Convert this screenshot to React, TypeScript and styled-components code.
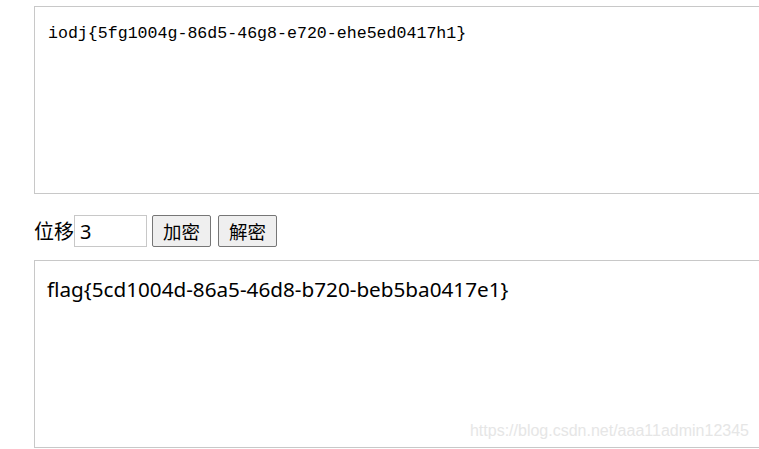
import React, { useState } from 'react'
import styled, { createGlobalStyle } from 'styled-components'

const GlobalStyle = createGlobalStyle`
    html, body {
        margin: 0;
        padding: 0;
        background: #ffffff;
        overflow: hidden;
    }
`

const Page = styled.div`
    position: relative;
    width: 759px;
    height: 449px;
    padding: 6px 0 0 34px;
    box-sizing: border-box;
    display: flex;
    flex-direction: column;
    overflow: hidden;
`

const TextBox = styled.textarea<{ mono?: boolean }>`
    display: block;
    width: 760px;
    height: 188px;
    box-sizing: border-box;
    border: 1px solid #c8c8c8;
    border-right: none;
    margin: 0;
    resize: none;
    outline: none;
    color: #000;
    background: #fff;
    padding: ${(p) => (p.mono ? '17px 13px' : '14px 12px')};
    font-family: ${(p) =>
        p.mono ? '"Liberation Mono", "DejaVu Sans Mono", monospace' : '"Noto Sans", "Noto Sans CJK SC", sans-serif'};
    font-size: ${(p) => (p.mono ? '16.6px' : '20.7px')};
    line-height: ${(p) => (p.mono ? '20px' : '28px')};
    overflow: hidden;
`

const Controls = styled.div`
    display: flex;
    align-items: center;
    height: 33px;
    margin: 20px 0 13px;
`

const Label = styled.span`
    font-family: 'Noto Sans CJK SC', sans-serif;
    font-size: 20px;
    line-height: 24px;
    color: #000;
`

const ShiftInput = styled.input`
    width: 73px;
    height: 32px;
    box-sizing: border-box;
    border: 1px solid #c8c8c8;
    padding: 0 5px;
    margin: 1px 5px 0 0;
    font-family: 'Noto Sans', sans-serif;
    font-size: 20px;
    outline: none;
`

const Button = styled.button`
    height: 32px;
    box-sizing: border-box;
    padding: 0 10px;
    margin-right: 7px;
    border: 1px solid #767676;
    border-radius: 2px;
    background: #efefef;
    color: #000;
    font-family: 'Noto Sans CJK SC', sans-serif;
    font-size: 18.5px;
    line-height: 30px;
`

const Watermark = styled.div`
    position: absolute;
    right: 10px;
    bottom: 9px;
    font-family: 'Liberation Sans', Arial, sans-serif;
    font-size: 16px;
    color: #e6e6e6;
    pointer-events: none;
`

export default function App() {
    const [shift, setShift] = useState('3')
    return (
        <Page>
            <GlobalStyle />
            <TextBox mono readOnly value="iodj{5fg1004g-86d5-46g8-e720-ehe5ed0417h1}" />
            <Controls>
                <Label>位移</Label>
                <ShiftInput value={shift} onChange={(e) => setShift(e.target.value)} />
                <Button>加密</Button>
                <Button>解密</Button>
            </Controls>
            <TextBox readOnly value="flag{5cd1004d-86a5-46d8-b720-beb5ba0417e1}" />
            <Watermark>https://blog.csdn.net/aaa11admin12345</Watermark>
        </Page>
    )
}
